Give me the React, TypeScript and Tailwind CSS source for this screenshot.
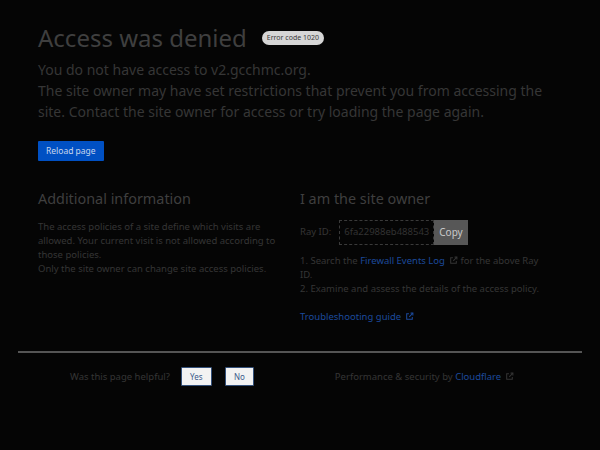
import React from "react";

function ExtIcon() {
  return (
    <svg viewBox="0 0 16 16" className="ml-[4px] inline-block h-[9px] w-[9px] align-[-1px]" fill="none" stroke="currentColor" strokeWidth="1.8">
      <path d="M7 3H3v10h10V9" />
      <path d="M10 2h4v4" />
      <path d="M14 2L7.5 8.5" />
    </svg>
  );
}

export default function App() {
  return (
    <div className="min-h-[450px] bg-[#050505] font-['Noto_Sans',sans-serif] text-[#353535]">
      <div className="px-[38px] pt-[22px]">
        <div className="flex items-center gap-[15px]">
          <h1 className="text-[24px] leading-[32px] text-[#3f3f3f]">Access was denied</h1>
          <span className="rounded-full bg-[#d6d6d6] px-[5px] py-[1px] text-[7px] leading-[12px] text-[#3a3a3a]">
            Error code 1020
          </span>
        </div>
        <div className="mt-[5px] w-[520px] text-[14px] leading-[21px] text-[#363636]">
          <p>You do not have access to v2.gcchmc.org.</p>
          <p>
            The site owner may have set restrictions that prevent you from accessing the site. Contact the site owner
            for access or try loading the page again.
          </p>
        </div>
        <button
          type="button"
          className="mt-[19px] h-[20px] rounded-[1px] bg-[#0050c3] px-[8px] text-[8.5px] text-[#c7d6ee]"
        >
          Reload page
        </button>

        <div className="mt-[28px] grid w-[524px] grid-cols-2">
          <div className="pr-[12px]">
            <h2 className="text-[14.4px] leading-[20px] text-[#3f3f3f]">Additional information</h2>
            <div className="mt-[11px] text-[9.5px] leading-[14px]">
              <p>
                The access policies of a site define which visits are allowed. Your current visit is not allowed
                according to those policies.
              </p>
              <p>Only the site owner can change site access policies.</p>
            </div>
          </div>
          <div className="pr-[22px]">
            <h2 className="text-[14.4px] leading-[20px] text-[#3f3f3f]">I am the site owner</h2>
            <div className="mt-[11px] flex items-center text-[9.5px]">
              <span className="mr-[8px]">Ray ID:</span>
              <span className="flex h-[25px] items-center border border-dashed border-[#3a3a3a] px-[4px] text-[#333]">
                6fa22988eb488543
              </span>
              <span className="flex h-[25px] items-center bg-[#575757] px-[5px] text-[10px] text-[#c9c9c9]">Copy</span>
            </div>
            <div className="mt-[9px] text-[9.5px] leading-[14px]">
              <p>
                1. Search the <span className="text-[#1c4a9c]">Firewall Events Log</span>
                <ExtIcon /> for the above Ray ID.
              </p>
              <p>2. Examine and assess the details of the access policy.</p>
            </div>
            <p className="mt-[14px] text-[9.5px] leading-[14px] text-[#1c4a9c]">
              Troubleshooting guide
              <ExtIcon />
            </p>
          </div>
        </div>
      </div>

      <div className="mx-[18px] mt-[27px] h-[2px] bg-[#555]" />

      <div className="mt-[14px] flex items-center text-[9.5px] leading-[14px]">
        <span className="ml-[70px]">Was this page helpful?</span>
        <button
          type="button"
          className="ml-[11px] h-[19px] w-[31px] rounded-[1px] border border-[#33507a] bg-[#f2f2f2] text-[8px] text-[#3b5a8c]"
        >
          Yes
        </button>
        <button
          type="button"
          className="ml-[13px] h-[19px] w-[29px] rounded-[1px] border border-[#33507a] bg-[#f2f2f2] text-[8px] text-[#3b5a8c]"
        >
          No
        </button>
        <span className="ml-[81px]">
          Performance &amp; security by <span className="text-[#1c4a9c]">Cloudflare</span>
          <ExtIcon />
        </span>
      </div>
    </div>
  );
}
